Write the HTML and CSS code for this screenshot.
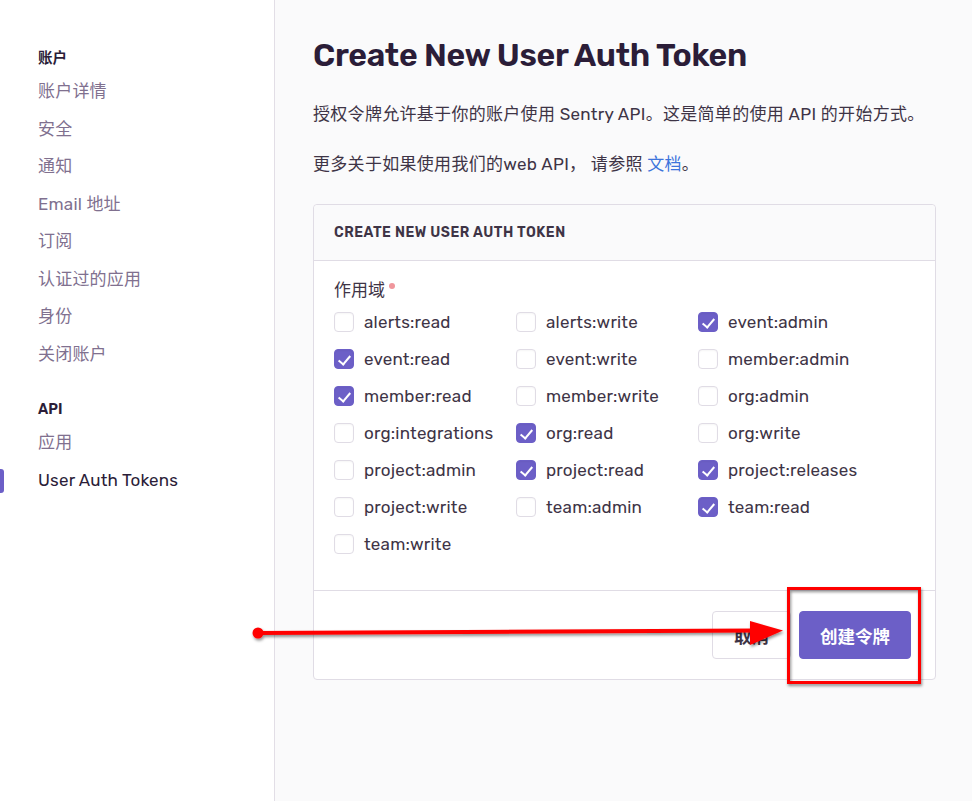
FILE: index.html
```html
<!DOCTYPE html>
<html lang="zh">
<head>
<meta charset="utf-8">
<title>Create New User Auth Token</title>
<link rel="stylesheet" href="styles.css">
</head>
<body>
<div class="page">
  <aside class="sidebar">
    <div class="nav-heading">账户</div>
    <a class="nav-item">账户详情</a>
    <a class="nav-item">安全</a>
    <a class="nav-item">通知</a>
    <a class="nav-item">Email 地址</a>
    <a class="nav-item">订阅</a>
    <a class="nav-item">认证过的应用</a>
    <a class="nav-item">身份</a>
    <a class="nav-item">关闭账户</a>
    <div class="nav-heading nav-heading-api">API</div>
    <a class="nav-item">应用</a>
    <a class="nav-item active">User Auth Tokens</a>
  </aside>
  <main class="content">
    <h1 class="title">Create New User Auth Token</h1>
    <p class="text text-first">授权令牌允许基于你的账户使用 Sentry API。这是简单的使用 API 的开始方式。</p>
    <p class="text">更多关于如果使用我们的web API， 请参照 <a class="link">文档</a>。</p>
    <section class="panel">
      <header class="panel-header">Create New User Auth Token</header>
      <div class="panel-body">
        <div class="field-label">作用域<span class="required"></span></div>
        <div class="scopes">
          <label class="scope"><span class="box"></span>alerts:read</label>
          <label class="scope"><span class="box"></span>alerts:write</label>
          <label class="scope"><span class="box checked"></span>event:admin</label>
          <label class="scope"><span class="box checked"></span>event:read</label>
          <label class="scope"><span class="box"></span>event:write</label>
          <label class="scope"><span class="box"></span>member:admin</label>
          <label class="scope"><span class="box checked"></span>member:read</label>
          <label class="scope"><span class="box"></span>member:write</label>
          <label class="scope"><span class="box"></span>org:admin</label>
          <label class="scope"><span class="box"></span>org:integrations</label>
          <label class="scope"><span class="box checked"></span>org:read</label>
          <label class="scope"><span class="box"></span>org:write</label>
          <label class="scope"><span class="box"></span>project:admin</label>
          <label class="scope"><span class="box checked"></span>project:read</label>
          <label class="scope"><span class="box checked"></span>project:releases</label>
          <label class="scope"><span class="box"></span>project:write</label>
          <label class="scope"><span class="box"></span>team:admin</label>
          <label class="scope"><span class="box checked"></span>team:read</label>
          <label class="scope"><span class="box"></span>team:write</label>
        </div>
      </div>
      <footer class="panel-footer">
        <button class="btn btn-default">取消</button>
        <button class="btn btn-primary">创建令牌</button>
      </footer>
    </section>
  </main>
</div>
<svg class="annotation" width="972" height="801" viewBox="0 0 972 801">
  <defs>
    <filter id="sh" x="-10%" y="-50%" width="120%" height="200%">
      <feDropShadow dx="1" dy="2" stdDeviation="1.5" flood-color="#000" flood-opacity="0.45"/>
    </filter>
  </defs>
  <g filter="url(#sh)" fill="#ff0000" stroke="#ff0000">
    <circle cx="258" cy="633" r="5.5" stroke="none"/>
    <line x1="258" y1="633" x2="755" y2="630.5" stroke-width="4"/>
    <polygon points="750,621 783,630.5 750,645" stroke="none"/>
    <rect x="788.5" y="588.5" width="131" height="94" fill="none" stroke-width="3"/>
  </g>
</svg>
</body>
</html>
```
FILE: styles.css
```css
* { box-sizing: border-box; }
html, body { margin: 0; padding: 0; }
body {
  font-family: Rubik, Inter, "Noto Sans CJK SC", sans-serif;
  color: #2b1d38;
  background: #fafafb;
  width: 972px;
  height: 801px;
  overflow: hidden;
  position: relative;
}
.page {
  display: flex;
  height: 801px;
}
.sidebar {
  width: 275px;
  flex: none;
  background: #fff;
  border-right: 1px solid #e2dee6;
  padding: 48px 0 0 38px;
  display: flex;
  flex-direction: column;
  align-items: flex-start;
}
.nav-heading {
  font-size: 14.5px;
  font-weight: 600;
  line-height: 20px;
  color: #2b1d38;
  margin-bottom: 5px;
}
.nav-heading-api {
  margin-top: 26px;
}
.nav-item {
  font-size: 17px;
  letter-spacing: 0.2px;
  line-height: 37.5px;
  color: #80708f;
  position: relative;
}
.nav-item.active {
  color: #2b1d38;
}
.nav-item.active::before {
  content: "";
  position: absolute;
  left: -38px;
  top: 7px;
  width: 4px;
  height: 24px;
  background: #6c5fc7;
  border-radius: 0 3px 3px 0;
}
.content {
  flex: 1;
  padding: 0 37px 0 38px;
}
.title {
  margin: 35px 0 0;
  font-size: 32px;
  line-height: 40px;
  font-weight: 600;
  color: #2b1d38;
  letter-spacing: -0.3px;
}
.text {
  margin: 26px 0 0;
  font-size: 17px;
  letter-spacing: 0.3px;
  line-height: 24px;
  color: #3e3446;
}
.text-first { margin-top: 27px; }
.link { color: #3d74db; }
.panel {
  margin-top: 28px;
  background: #fff;
  border: 1px solid #e0dce5;
  border-radius: 4px;
  width: 623px;
}
.panel-header {
  height: 56px;
  background: #fafafb;
  border-bottom: 1px solid #e0dce5;
  border-radius: 4px 4px 0 0;
  padding: 0 20px;
  display: flex;
  align-items: center;
  text-transform: uppercase;
  font-size: 14px;
  letter-spacing: 0.5px;
  font-weight: 600;
  color: #3e3446;
}
.panel-body {
  padding: 17px 20px 28px;
}
.field-label {
  font-size: 17px;
  line-height: 24px;
  color: #3e3446;
  display: flex;
  align-items: flex-start;
}
.required {
  width: 6px;
  height: 6px;
  border-radius: 50%;
  background: #f0969c;
  margin: 5px 0 0 4px;
}
.scopes {
  margin-top: 1px;
  display: grid;
  grid-template-columns: 182px 182px 182px;
  grid-auto-rows: 37px;
}
.scope {
  display: flex;
  align-items: center;
  font-size: 17px;
  letter-spacing: 0.2px;
  color: #3e3446;
  white-space: nowrap;
}
.box {
  width: 20px;
  height: 20px;
  border: 1px solid #e0dce5;
  border-radius: 4px;
  box-shadow: inset 0 1px 2px rgba(0,0,0,0.04);
  margin-right: 10px;
  flex: none;
  background: #fff;
  position: relative;
}
.box.checked {
  background: #6c5fc7;
  border-color: #6c5fc7;
}
.box.checked::after {
  content: "";
  position: absolute;
  left: 6px;
  top: 3px;
  width: 5px;
  height: 10px;
  border: solid #fff;
  border-width: 0 2px 2px 0;
  transform: rotate(40deg);
}
.panel-footer {
  border-top: 1px solid #e0dce5;
  padding: 20px 24px 20px;
  display: flex;
  justify-content: flex-end;
  gap: 8px;
}
.btn {
  height: 48px;
  border-radius: 4px;
  font-family: inherit;
  font-size: 17.5px;
  font-weight: 700;
  padding: 0 10px;
  cursor: pointer;
}
.btn-default {
  background: #fff;
  border: 1px solid #e0dce5;
  color: #3e3446;
  width: 79px;
}
.btn-primary {
  background: #6c5fc7;
  border: 1px solid #6c5fc7;
  color: #fff;
  width: 112px;
}
.annotation {
  position: absolute;
  left: 0;
  top: 0;
  pointer-events: none;
}
```
